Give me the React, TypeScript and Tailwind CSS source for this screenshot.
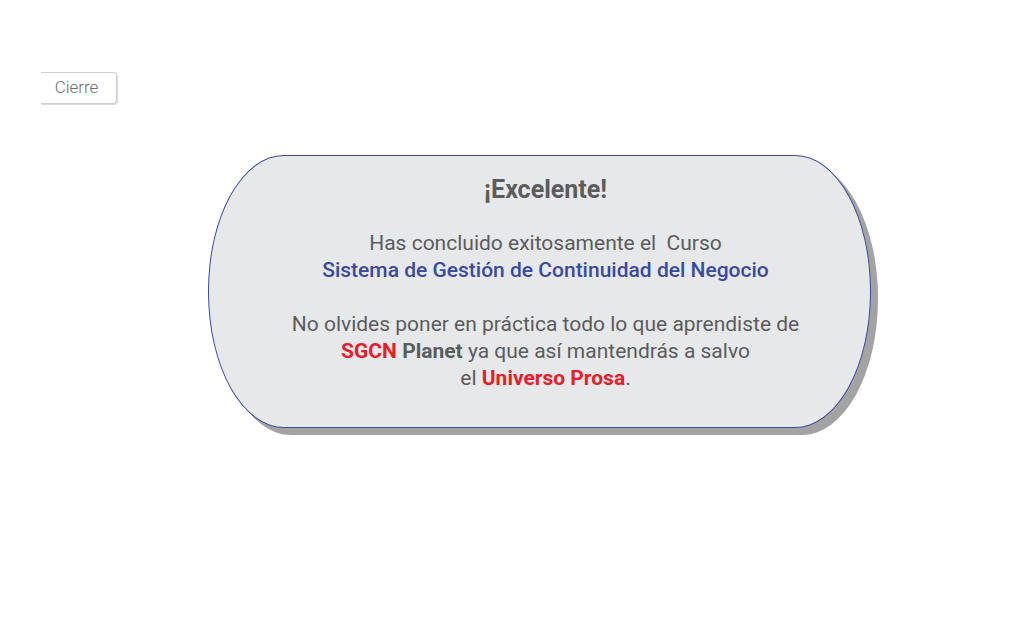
export default function App() {
  return (
    <div className="w-[1024px] h-[620px] bg-white flex flex-col" style={{ fontFamily: 'Roboto, "Noto Sans", sans-serif' }}>
      <div className="pt-[72px] pl-[41px]">
        <button className="w-[76px] h-[32px] border-t border-r border-b border-[#cfcfcf] rounded-r-[4px] shadow-[1px_1px_1px_#d8d8d8] text-[17px] font-light text-[#6d6e70] flex items-center justify-center pr-[4px]">
          Cierre
        </button>
      </div>
      <div className="pl-[208px] pt-[51px]">
        <div className="w-[663px] h-[273px] bg-[#e7e8e9] border border-[#3d4a9f] rounded-[76px/136px] shadow-[7px_7px_0_#a3a3a3] pt-[20px] pl-[12px] text-center text-[21px] leading-[27px] text-[#5b5c5e]">
          <p className="font-bold text-[25px]">¡Excelente!</p>
          <p className="mt-[27px]">Has concluido exitosamente el&nbsp; Curso</p>
          <p className="font-medium text-[#3b4a9c]">Sistema de Gestión de Continuidad del Negocio</p>
          <p className="mt-[27px]">No olvides poner en práctica todo lo que aprendiste de</p>
          <p>
            <span className="font-bold text-[#e5202a]">SGCN</span> <span className="font-bold">Planet</span> ya que así mantendrás a salvo
          </p>
          <p>
            el <span className="font-bold text-[#e5202a]">Universo Prosa</span>.
          </p>
        </div>
      </div>
    </div>
  );
}
